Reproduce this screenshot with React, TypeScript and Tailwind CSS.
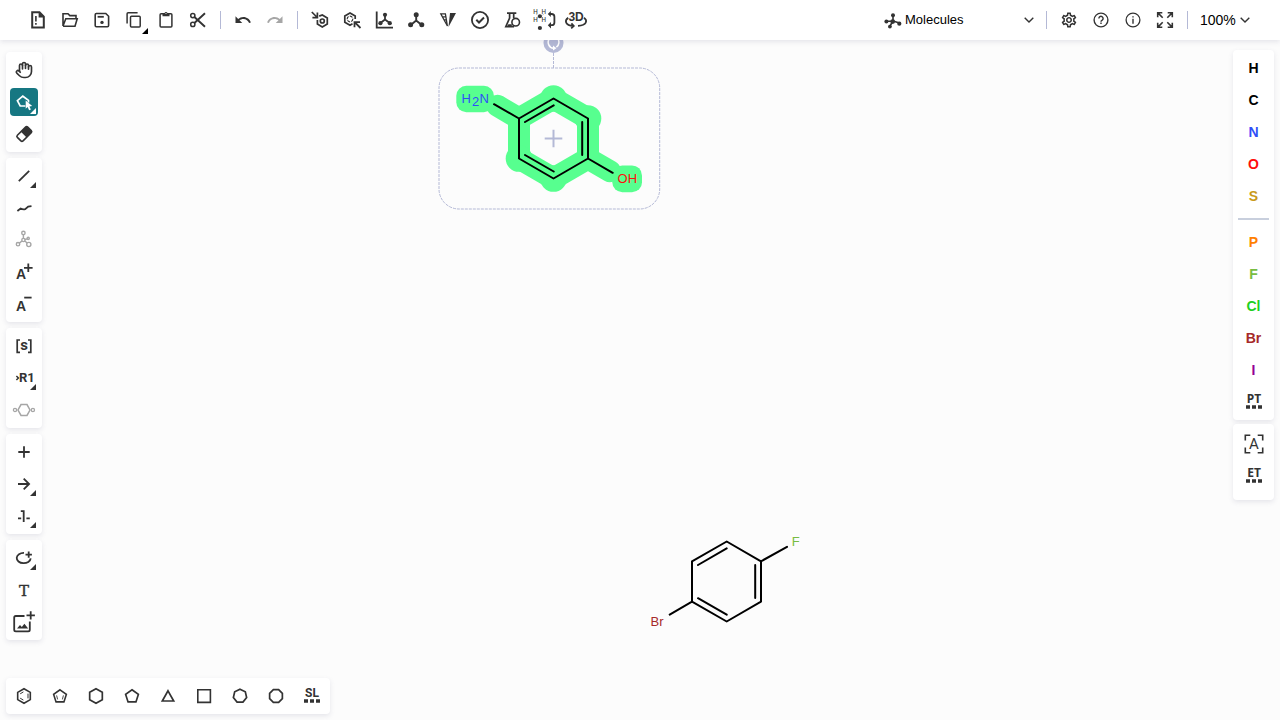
import type { ReactNode } from "react";
import { Hand } from "lucide-react";
import { MdOutlineSettings, MdUndo, MdRedo } from "react-icons/md";

type Tool = { name: string; icon: ReactNode; more?: boolean; active?: boolean; disabled?: boolean };

function Icon({ children }: { children: ReactNode }) {
  return (
    <svg
      viewBox="0 0 24 24"
      className="size-6 overflow-visible"
      fill="none"
      stroke="currentColor"
      strokeWidth="1.8"
      aria-hidden="true"
    >
      {children}
    </svg>
  );
}

function ToolButton({ tool, corner = false }: { tool: Tool; corner?: boolean }) {
  const tone = tool.active ? "bg-[#167782] text-white" : tool.disabled ? "text-[#a6a6a6]" : "text-[#333333]";
  return (
    <button
      type="button"
      aria-label={tool.name}
      disabled={tool.disabled}
      className={`relative flex size-7 shrink-0 items-center justify-center rounded ${tone}`}
    >
      {tool.icon}
      {tool.more && (
        <svg
          viewBox="0 0 6 6"
          className={corner ? "absolute right-0 bottom-0 size-1.5 text-black" : "absolute right-0.5 bottom-0.5 size-1.5"}
          aria-hidden="true"
        >
          <path d="M6 0v6H0z" fill="currentColor" />
        </svg>
      )}
    </button>
  );
}

function ring(sides: number, radius: number, turn = 0, cx = 12, cy = 12) {
  return Array.from({ length: sides }, (_, i) => {
    const a = -Math.PI / 2 + turn + (i * 2 * Math.PI) / sides;
    return `${(cx + radius * Math.cos(a)).toFixed(2)},${(cy + radius * Math.sin(a)).toFixed(2)}`;
  }).join(" ");
}

function Label({ x, y, size, children, weight = 700, family = "Inter, sans-serif" }: {
  x: number; y: number; size: number; children: string; weight?: number; family?: string;
}) {
  return (
    <text x={x} y={y} fontSize={size} fontWeight={weight} fontFamily={family} textAnchor="middle" fill="currentColor" stroke="none">
      {children}
    </text>
  );
}

function Dotted({ text, family = "Noto Sans, sans-serif" }: { text: string; family?: string }) {
  return (
    <Icon>
      <Label x={12} y={13.4} size={12} family={family}>{text}</Label>
      <path d="M4 15.3h4v3.4H4zM10 15.3h4v3.4h-4zM16 15.3h4v3.4h-4z" fill="currentColor" stroke="none" />
    </Icon>
  );
}

const fileTools: Tool[] = [
  { name: "Clear canvas", icon: <Icon><path d="M6.2 4.3h7.3l4.3 4.3v10.8H6.2z" strokeWidth="2" /><path d="M12.6 4v5.4H18z" fill="currentColor" stroke="none" /><path d="M9.9 8v5.4M9.9 15v1.8" strokeWidth="1.6" /></Icon> },
  { name: "Open", icon: <Icon><path d="M5 18V5.8h5l1.8 1.8H18v3M5 18l2.8-7.2h11.4L17 18.2H5" strokeWidth="1.6" /></Icon> },
  { name: "Save as", icon: <Icon><path d="M6 5.5h9.8l2.8 2.8v9.2q0 1.2-1.2 1.2H6.4q-1.2 0-1.2-1.2V6.7q0-1.2 1.2-1.2z" strokeWidth="1.6" /><path d="M7.6 8.8h6.2" strokeWidth="1.8" /><circle cx="12" cy="14.4" r="1.7" fill="currentColor" stroke="none" /></Icon> },
  { name: "Copy", more: true, icon: <Icon><path d="M5.1 15.5V5.8q0-1 1-1h9.5" strokeWidth="1.5" /><rect x="8.5" y="8.3" width="9.7" height="10.7" rx="1" strokeWidth="1.5" /></Icon> },
  { name: "Paste", icon: <Icon><rect x="6.1" y="5.8" width="11.8" height="13.2" rx="1" strokeWidth="1.5" /><path d="M8.5 5h2a1.6 1.6 0 0 1 3 0h2v3.3h-7z" fill="currentColor" stroke="none" /><circle cx="12" cy="5.5" r="0.6" fill="white" stroke="none" /></Icon> },
  { name: "Cut", icon: <Icon><circle cx="6.8" cy="7.6" r="2.1" strokeWidth="1.5" /><circle cx="6.8" cy="16.4" r="2.1" strokeWidth="1.5" /><path d="M8.4 9 19 18.8M8.4 15 19 5.2" strokeWidth="1.9" /></Icon> },
];

const structureTools: Tool[] = [
  { name: "Layout", icon: <Icon><path d="M3.8 4l5 5M9.4 4.6v5H4.4" strokeWidth="1.7" /><path d="M11.2 8.1 14.3 6.9 19.3 9.9v6l-5 3-4.9-3v-4" strokeWidth="1.7" /><circle cx="14.3" cy="13" r="2" strokeWidth="1.7" /></Icon> },
  { name: "Clean up", icon: <Icon><path d="M15.2 11V8L10 5 4.8 8v6.2L10 17.2l2.5-1.4" strokeWidth="1.7" /><circle cx="10" cy="11" r="2.8" strokeWidth="1.2" strokeDasharray="3 1.2" /><path d="M20.5 20l-5.6-5.6M14.5 19.3v-5.2h5.5" strokeWidth="1.8" /></Icon> },
  { name: "Calculate CIP", icon: <Icon><path d="M4.7 3.5v16.2H21" /><path d="M13 7v4.5L8.5 15M13 11.5l4.7 3.5" strokeWidth="1.8" /><g fill="currentColor" stroke="none"><circle cx="13" cy="6.8" r="2.1" /><circle cx="8.4" cy="15.2" r="2.1" /><circle cx="17.8" cy="15.2" r="2.1" /></g></Icon> },
  { name: "Aromatize", icon: <Icon><path d="M12.2 7v5.5L6.7 17M12.2 12.5l5.5 4.5" strokeWidth="1.9" /><g fill="currentColor" stroke="none"><circle cx="12.2" cy="6.8" r="2.5" /><circle cx="6.6" cy="16.8" r="2.5" /><circle cx="17.8" cy="16.8" r="2.5" /></g></Icon> },
  { name: "Stereochemistry", icon: <Icon><path d="M4.8 5.9h4.6L11.4 18zM6.2 8.8h3.7M7.6 11.9h2.8" strokeWidth="1.3" /><path d="M14 5h6L12.5 19z" fill="currentColor" stroke="none" /></Icon> },
  { name: "Check structure", icon: <Icon><circle cx="12" cy="12" r="8.1" /><path d="M8.3 11.8l2.7 2.7 5-5" strokeWidth="2" /></Icon> },
  { name: "Calculated values", icon: <Icon><path d="M7 5.1h9.3M9.6 5v5.1L5.8 18.7h8.3M13.7 5v5" strokeWidth="1.7" /><path d="M8.4 16.2h3.4v2H7.2z" fill="currentColor" stroke="none" /><circle cx="15.7" cy="14.2" r="3.8" strokeWidth="1.6" fill="white" /></Icon> },
  { name: "Add or remove hydrogens", icon: <Icon><g><Label x={3.6} y={6} size={6} weight={500}>H</Label><Label x={11.7} y={6} size={6} weight={500}>H</Label><Label x={3.6} y={14.2} size={6} weight={500}>H</Label><Label x={11.7} y={14.2} size={6} weight={500}>H</Label></g><path d="M4.5 6.5l7 4M11.5 6.5l-7 4" strokeWidth="0.5" strokeDasharray="1 1" /><g fill="currentColor" stroke="none"><circle cx="7.9" cy="8.2" r="2" /><circle cx="7.9" cy="20" r="2.1" /></g><path d="M17.2 6h2.4a2.8 2.8 0 0 1 2.8 2.8v5.6a2.8 2.8 0 0 1-2.8 2.8h-2.4" strokeWidth="1.8" /><path d="M15.8 6l3-3v6zM15.8 17.2l3.2-3.2v6.4z" fill="currentColor" stroke="none" /></Icon> },
  { name: "3D viewer", icon: <Icon><Label x={12.1} y={12.6} size={12} weight={700} family="Liberation Sans, sans-serif">3D</Label><path d="M4.2 9.8C.4 12.5.8 17.3 9.4 18M20 9.8c3.7 2.7 3 7.5-6 8.1M7.4 15.4l2.4 2.6-2.6 2.3" strokeWidth="1.7" /></Icon> },
];

const leftGroups: { label: string; tools: Tool[] }[] = [
  {
    label: "Selection",
    tools: [
      { name: "Hand", icon: <Hand className="size-[18px]" strokeWidth={2.2} /> },
      { name: "Structure selection", active: true, more: true, icon: <Icon><path d="M13.4 16H8.2L5.4 10.6l5.4-4.4 5.7 4.2v2" strokeWidth="1.7" /><path d="M13.7 10.5v8.3l1.9-1.7 1.5 3.1 1.8-.8-1.5-3 2.8-.3z" fill="currentColor" stroke="none" /></Icon> },
      { name: "Erase", icon: <Icon><g transform="rotate(-45 12.3 12)"><rect x="5" y="8" width="14.6" height="8" rx="1.5" strokeWidth="1.6" /><path d="M11.5 8h7q1 0 1 1v6q0 1-1 1h-7z" fill="currentColor" stroke="none" /></g></Icon> },
    ],
  },
  {
    label: "Bonds and charges",
    tools: [
      { name: "Single bond", more: true, icon: <Icon><path d="M6.8 17.2 17.2 6.8" /></Icon> },
      { name: "Chain", icon: <Icon><path d="M5.4 15l3.2-2.5q2.2 1.2 4.6.7l3-2.6 3.3-.4" /></Icon> },
      { name: "Enhanced stereochemistry", disabled: true, icon: <Icon><g strokeWidth="1.4"><circle cx="11.4" cy="5" r="1.7" /><circle cx="11.4" cy="12" r="1.6" /><circle cx="6" cy="16.2" r="1.7" /><circle cx="16.8" cy="16.5" r="2.1" /><circle cx="16.2" cy="10.4" r="1.1" /><path d="M11.4 6.8v3.4M10 13l-2.7 2.1M12.8 13l2.4 2M13 11.5l2-.7" /></g></Icon> },
      { name: "Charge plus", icon: <Icon><Label x={9} y={19.2} size={14} family="Liberation Sans, sans-serif">A</Label><path d="M16.3 3.5v8.6M12 7.8h8.6" /></Icon> },
      { name: "Charge minus", icon: <Icon><Label x={9} y={19.2} size={14} family="Liberation Sans, sans-serif">A</Label><path d="M12.2 5.6h7.4" /></Icon> },
    ],
  },
  {
    label: "Groups",
    tools: [
      { name: "S-group", icon: <Icon><path d="M8 6H5.2v12.4H8M16 6h2.8v12.4H16" strokeWidth="1.7" /><Label x={12} y={16.3} size={15} family="Roboto, sans-serif">s</Label></Icon> },
      { name: "R-group", more: true, icon: <Icon><path d="M4.4 10 6.4 12l-2 2" strokeWidth="1.5" /><Label x={14.8} y={16.4} size={13} family="Roboto, sans-serif">R1</Label></Icon> },
      { name: "Polymer link", disabled: true, icon: <Icon><polygon points="9,6.6 15,6.6 18,12 15,17.4 9,17.4 6,12" strokeWidth="1.5" /><g strokeWidth="1.3"><circle cx="3" cy="12" r="1.6" /><circle cx="20.9" cy="12" r="1.6" /></g></Icon> },
    ],
  },
  {
    label: "Reactions",
    tools: [
      { name: "Reaction plus", icon: <Icon><path d="M12 6.3v11.4M6.3 12h11.4" /></Icon> },
      { name: "Reaction arrow", more: true, icon: <Icon><path d="M6 12h11M11.7 6.6l5.4 5.4-5.4 5.4" /></Icon> },
      { name: "Reaction mapping", more: true, icon: <Icon><path d="M6 14.4h3.2M14.4 14.4h3.4M8.8 7.1h2.9v10.8" strokeWidth="1.8" /></Icon> },
    ],
  },
  {
    label: "Annotations",
    tools: [
      { name: "Shape", more: true, icon: <Icon><path d="M12 6.8a7 5.2 0 1 0 6.7 5.6M16.7 5.4v6.4M13.5 8.6h6.4" strokeWidth="1.8" /></Icon> },
      { name: "Text", icon: <Icon><text x="12" y="18" fontSize="15" textAnchor="middle" fill="currentColor" strokeWidth="0.4" className="font-['DejaVu_Serif',serif]">T</text></Icon> },
      { name: "Add image", icon: <Icon><path d="M12.5 6H3.8q-1.6 0-1.6 1.6v12.2q0 1.6 1.6 1.6h12.4q1.6 0 1.6-1.6v-8.3" strokeWidth="1.8" /><path d="M18.7 1.2v8.4M14.5 5.4h8.4" /><path d="M5 18.6l3-3.6 1.8 2 2.6-3.2 3.8 4.8z" fill="currentColor" stroke="none" /></Icon> },
    ],
  },
];

const templates: Tool[] = [
  { name: "Benzene", icon: <Icon><polygon points={ring(6, 7.3)} strokeWidth="1.6" /><path d="M16 9.6v4.8M8.2 9.8l3.2-1.9M8.2 14.2l3.2 1.9" strokeWidth="1" /></Icon> },
  { name: "Cyclopentadiene", icon: <Icon><polygon points={ring(5, 6.7, 0, 12, 12.5)} strokeWidth="1.6" /><path d="M8.6 11.4l1 4M15.4 11.4l-1 4" strokeWidth="0.9" /></Icon> },
  { name: "Cyclohexane", icon: <Icon><polygon points={ring(6, 7.3)} strokeWidth="1.7" /></Icon> },
  { name: "Cyclopentane", icon: <Icon><polygon points={ring(5, 6.7, 0, 12, 12.5)} strokeWidth="1.7" /></Icon> },
  { name: "Cyclopropane", icon: <Icon><path d="M12 6.8l5.7 10.2H6.3z" strokeWidth="1.7" /></Icon> },
  { name: "Cyclobutane", icon: <Icon><path d="M5.8 5.8h12.6v12.6H5.8z" strokeWidth="1.6" /></Icon> },
  { name: "Cycloheptane", icon: <Icon><polygon points={ring(7, 6.8)} strokeWidth="1.7" /></Icon> },
  { name: "Cyclooctane", icon: <Icon><polygon points={ring(8, 6.9, Math.PI / 8)} strokeWidth="1.7" /></Icon> },
  { name: "Structure library", icon: <Dotted text="SL" family="Roboto, sans-serif" /> },
];

const commonAtoms = [
  { symbol: "H", color: "text-black" },
  { symbol: "C", color: "text-black" },
  { symbol: "N", color: "text-[#304ff7]" },
  { symbol: "O", color: "text-[#ff0d0d]" },
  { symbol: "S", color: "text-[#c99a19]" },
];
const otherAtoms = [
  { symbol: "P", color: "text-[#ff8000]" },
  { symbol: "F", color: "text-[#78bc42]" },
  { symbol: "Cl", color: "text-[#1fd01f]" },
  { symbol: "Br", color: "text-[#a62929]" },
  { symbol: "I", color: "text-[#940094]" },
];

const utilities: Tool[] = [
  { name: "Settings", icon: <MdOutlineSettings className="size-[18px]" /> },
  { name: "Help", icon: <Icon><circle cx="12" cy="12" r="6.9" strokeWidth="1.4" /><path d="M9.9 10.4a2.1 2.1 0 1 1 3.3 1.7q-1.2.7-1.2 1.7M12 14.6v1.4" strokeWidth="1.4" /></Icon> },
  { name: "About", icon: <Icon><circle cx="12" cy="12" r="6.9" strokeWidth="1.3" /><path d="M12 8.2v1.3M12 10.8v5" strokeWidth="1.4" /></Icon> },
  { name: "Fullscreen", icon: <Icon><path d="M4.7 9.3V4.7h4.6M4.9 4.9l4.8 4.8M14.7 4.7h4.6v4.6M19.1 4.9l-4.8 4.8M4.7 14.7v4.6h4.6M4.9 19.1l4.8-4.8M19.3 14.7v4.6h-4.6M19.1 19.1l-4.8-4.8" strokeWidth="1.6" /></Icon> },
];

function Divider() {
  return <div className="h-[18px] w-px shrink-0 bg-[#b4b9d6]" />;
}

function Chevron() {
  return (
    <svg viewBox="0 0 10 6" className="pointer-events-none -ml-2.5 h-1.5 w-2.5 shrink-0" fill="none" stroke="#333333" strokeWidth="1.4" aria-hidden="true">
      <path d="M.7.7 5 5 9.3.7" />
    </svg>
  );
}

function AtomButton({ symbol, color }: { symbol: string; color: string }) {
  return (
    <button type="button" className={`flex h-7 w-7 items-center justify-center text-sm font-bold ${color}`}>
      {symbol}
    </button>
  );
}

function Canvas() {
  return (
    <svg className="absolute inset-0 h-full w-full font-['Liberation_Sans',sans-serif]" role="img" aria-label="Structure canvas">
      <g transform="translate(0 -40)" fill="none">
        <g stroke="#b4b9d6">
          <rect x="439" y="68" width="220.7" height="141" rx="20" strokeDasharray="3 1" />
          <path d="M553.5 53v15" strokeDasharray="3 1" />
        </g>
        <circle cx="553.5" cy="43" r="10" fill="#b4b9d6" />
        <path d="M549.6 38.5a6 6 0 0 0 4 9.8M557.6 38.5a6 6 0 0 1-1.2 8.6" stroke="white" strokeWidth="1.5" />
        <path d="M553 45.6l3.4 2.6-3.4 2.4z" fill="white" />
        <g stroke="#57ff8f" strokeWidth="22" strokeLinecap="round" strokeLinejoin="round">
          <path d="M553.5 98.5 588 118.5v40l-34.5 20L519 158.5v-40zM519 118.5l-21.5-12.7M588 158.5l22 12.7" />
        </g>
        <g fill="#57ff8f">
          <circle cx="553.5" cy="98.5" r="13.3" />
          <circle cx="588" cy="118.5" r="13.3" />
          <circle cx="553.5" cy="178.5" r="13.3" />
          <circle cx="519" cy="158.5" r="13.3" />
          <rect x="456.3" y="85.7" width="37.6" height="26.6" rx="10" />
          <rect x="612.3" y="165.4" width="29.7" height="26.8" rx="10" />
        </g>
        <path d="M553.5 129.7v17.6M544.7 138.5h17.6" stroke="#b4b9d6" strokeWidth="2" />
        <g stroke="black" strokeWidth="2" strokeLinecap="round" strokeLinejoin="round">
          <path d="M553.5 98.5 588 118.5v40l-34.5 20L519 158.5v-40zM519 118.5l-25-14.3M588 158.5l24.7 14.3M525 122l28.7-16.6M582.2 122v33M525 155l28.7 16.5" />
          <path d="M726.7 541.5 761 561.3v40.3l-34.3 19.9-34.7-19.9v-40.3zM761 561.3l26-14.5M692 601.6l-22.3 13M698 565l28.7-16.6M755.2 565v33M698 598.2l28.7 16.5" />
        </g>
        <g fontSize="13">
          <g fill="#304ff7">
            <text x="461.5" y="103">H</text>
            <text x="472" y="106">2</text>
            <text x="479.5" y="103">N</text>
          </g>
          <text x="617.6" y="183" fill="#ff0d0d">OH</text>
          <text x="791.7" y="546" fill="#78bc42">F</text>
          <text x="650.6" y="626" fill="#a62929">Br</text>
        </g>
      </g>
    </svg>
  );
}

const card = "rounded bg-white p-1 shadow-[0_2px_5px_rgba(103,104,132,0.15)]";

export default function App() {
  return (
    <div className="flex h-screen min-w-max flex-col overflow-hidden bg-[#fcfcfc] font-['Liberation_Sans',sans-serif] text-[#333333]">
      <header className="z-10 flex h-10 shrink-0 items-center justify-between bg-white pr-[30px] pl-6 shadow-[0_2px_5px_rgba(103,104,132,0.15)]">
        <div className="flex items-center gap-2">
          <div className="flex gap-1">
            {fileTools.map((t) => <ToolButton key={t.name} tool={t} corner />)}
          </div>
          <Divider />
          <div className="flex gap-1">
            <ToolButton tool={{ name: "Undo", icon: <MdUndo className="size-[18px]" /> }} />
            <ToolButton tool={{ name: "Redo", disabled: true, icon: <MdRedo className="size-[18px]" /> }} />
          </div>
          <Divider />
          <div className="flex gap-1">
            {structureTools.map((t) => <ToolButton key={t.name} tool={t} />)}
          </div>
        </div>
        <div className="flex items-center gap-2">
          <label className="mr-1 flex w-[150px] items-center gap-1">
            <svg viewBox="0 0 18 18" className="size-[18px] shrink-0" fill="#333333" stroke="#333333" strokeWidth="1.6" aria-hidden="true">
              <path d="M2.5 10.3 8.5 10M9 4v6L6 15M9 10l6.5 2" fill="none" />
              <g stroke="none">
                <circle cx="9" cy="4.2" r="2" /><circle cx="2.4" cy="10.6" r="2" /><circle cx="8.7" cy="10.6" r="2.4" /><circle cx="15.3" cy="12.7" r="2.1" /><circle cx="5.9" cy="15.6" r="1.9" />
              </g>
            </svg>
            <select aria-label="Mode" className="-ml-px min-w-0 flex-1 appearance-none bg-transparent text-[13px] text-black" defaultValue="Molecules">
              <option>Molecules</option>
            </select>
            <Chevron />
          </label>
          <Divider />
          <div className="flex gap-1">
            {utilities.map((t) => <ToolButton key={t.name} tool={t} />)}
          </div>
          <Divider />
          <label className="ml-1 flex items-center">
            <select aria-label="Zoom" className="w-[50px] appearance-none bg-transparent text-sm text-black" defaultValue="100%">
              <option>100%</option>
            </select>
            <Chevron />
          </label>
        </div>
      </header>
      <main className="relative flex min-h-0 flex-1 flex-col justify-between px-1.5 pb-1.5">
        <Canvas />
        <div className="z-1 flex items-start justify-between">
          <nav aria-label="Drawing tools" className="mt-3 flex flex-col gap-1.5">
            {leftGroups.map((g) => (
              <div key={g.label} role="group" aria-label={g.label} className={`flex flex-col gap-1 ${card}`}>
                {g.tools.map((t) => <ToolButton key={t.name} tool={t} />)}
              </div>
            ))}
          </nav>
          <nav aria-label="Atoms" className="mt-2.5 flex w-[41px] flex-col gap-1">
            <div className={`flex flex-col items-center gap-1 ${card}`}>
              {commonAtoms.map((a) => <AtomButton key={a.symbol} {...a} />)}
              <div className="my-1 h-0.5 w-[31px] bg-[#c8cfdd]" />
              {otherAtoms.map((a) => <AtomButton key={a.symbol} {...a} />)}
              <ToolButton tool={{ name: "Periodic table", icon: <Dotted text="PT" /> }} />
            </div>
            <div className={`flex flex-col items-center gap-1 ${card}`}>
              <div className="flex flex-col gap-1 pt-0.5 pb-1.5">
                <ToolButton tool={{ name: "Any atom", icon: <Icon><path d="M3.3 8.5V3.3h5M15.7 3.3h5v5.2M20.7 15.5v5.2h-5M8.3 20.7h-5v-5.2" strokeWidth="1.6" /><Label x={12} y={17} size={15} weight={400} family="Roboto, sans-serif">A</Label></Icon> }} />
                <ToolButton tool={{ name: "Extended table", icon: <Dotted text="ET" /> }} />
              </div>
            </div>
          </nav>
        </div>
        <nav aria-label="Templates" className={`z-1 flex gap-2 self-start ${card}`}>
          {templates.map((t) => <ToolButton key={t.name} tool={t} />)}
        </nav>
      </main>
    </div>
  );
}
